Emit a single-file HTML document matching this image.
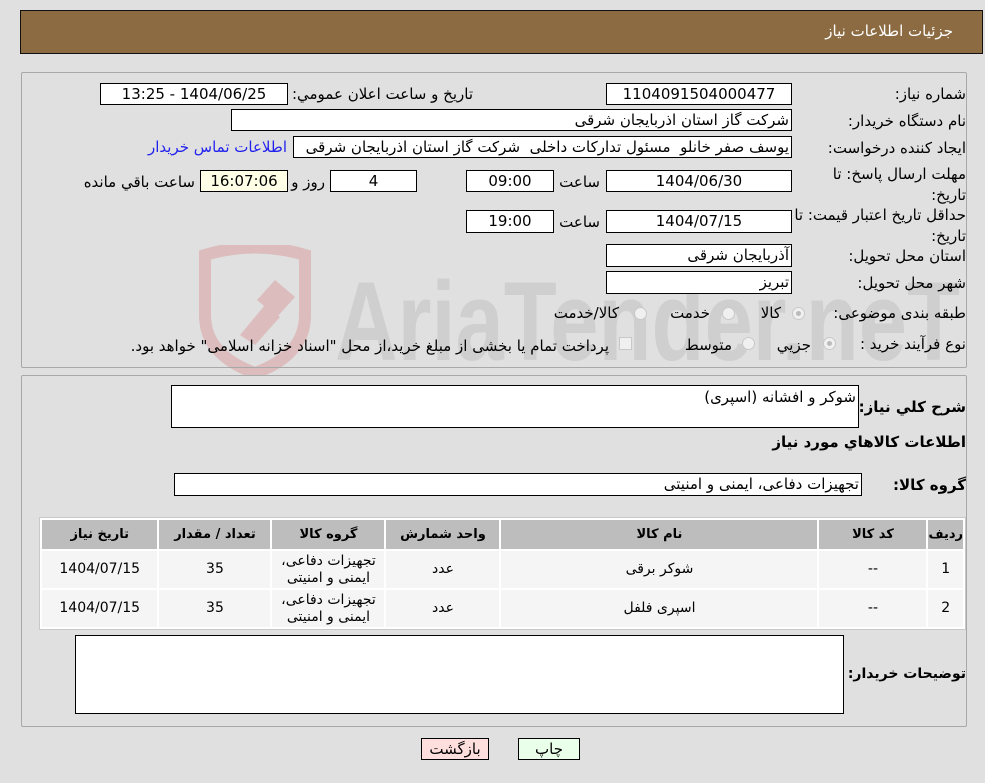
<!DOCTYPE html>
<html><head><meta charset="utf-8"><style>
*{box-sizing:border-box;margin:0;padding:0}
body{width:985px;height:783px;background:#e0e0e0;position:relative;overflow:hidden;font-family:Tahoma,"DejaVu Sans","Liberation Sans",sans-serif;font-size:15px;color:#000}
.a{position:absolute;white-space:nowrap}
.l{position:absolute;white-space:nowrap;direction:rtl;text-align:right}
.b{position:absolute;background:#fff;border:1px solid #000;font-size:15px;text-align:center;line-height:20px;white-space:nowrap;direction:rtl}
.br{text-align:right;padding-right:2px}
.panel{position:absolute;border:1px solid #a8a8a8;border-radius:2px}
.rad{position:absolute;width:13px;height:13px;border-radius:50%;border:1px solid #c8c8c8;background:#f0f0f0}
.rad.on:after{content:"";position:absolute;left:3px;top:3px;width:5px;height:5px;border-radius:50%;background:#bbb}
table{border-collapse:separate;border-spacing:2px;position:absolute;left:39px;top:517px;width:927px;background:#fff;border:1px solid #c8c8c8;font-size:14px}
th{background:#bdbdbd;height:29px;font-weight:bold;font-size:13px}
td{background:#f5f5f5;height:37px;text-align:center;line-height:17px}
</style></head><body>
<div class="a" style="left:20px;top:10px;width:963px;height:44px;background:#8c6b42;border:1px solid #111"></div>
<div class="l" style="right:32px;top:22px;color:#fff;font-size:15px">جزئیات اطلاعات نیاز</div>

<!-- watermark -->
<svg class="a" style="left:195px;top:245px" width="790" height="130">
<path d="M10 10 Q60 -5 110 10 L110 70 Q110 110 60 128 Q10 110 10 70Z" fill="none" stroke="#dcbcbc" stroke-width="12"/>
<path d="M45 90 L70 60 L85 72 L60 100Z M62 55 L80 35 L100 52 L82 72Z" fill="#dcbcbc"/>
<text x="140" y="115" font-family="Liberation Sans" font-weight="bold" font-size="112" fill="#cfcfcf" textLength="625" lengthAdjust="spacingAndGlyphs">AriaTender.neT</text>
</svg>

<div class="panel" style="left:21px;top:72px;width:946px;height:296px"></div>
<div class="l" style="right:19px;top:85px">شماره نیاز:</div>
<div class="b" style="left:606px;top:83px;width:186px;height:22px">1104091504000477</div>
<div class="l" style="right:512px;top:85px">تاریخ و ساعت اعلان عمومي:</div>
<div class="b" style="left:100px;top:83px;width:188px;height:22px">1404/06/25 - 13:25</div>

<div class="l" style="right:19px;top:112px">نام دستگاه خریدار:</div>
<div class="b br" style="left:231px;top:109px;width:561px;height:22px">شرکت گاز استان اذربایجان شرقی</div>

<div class="l" style="right:19px;top:139px">ایجاد کننده درخواست:</div>
<div class="b br" style="left:293px;top:136px;width:499px;height:22px;overflow:hidden">یوسف صفر خانلو &nbsp;مسئول تدارکات داخلی &nbsp;شرکت گاز استان اذربایجان شرقی</div>
<div class="l" style="right:698px;top:138px;color:#2222ee;font-size:15px">اطلاعات تماس خریدار</div>

<div class="l" style="right:19px;top:164px;line-height:21px">مهلت ارسال پاسخ: تا<br>تاریخ:</div>
<div class="b" style="left:606px;top:170px;width:186px;height:22px">1404/06/30</div>
<div class="l" style="right:385px;top:173px;font-size:15px">ساعت</div>
<div class="b" style="left:466px;top:170px;width:88px;height:22px">09:00</div>
<div class="b" style="left:330px;top:170px;width:87px;height:22px">4</div>
<div class="l" style="right:660px;top:173px;font-size:15px">روز و</div>
<div class="b" style="left:200px;top:170px;width:88px;height:22px;background:#ffffe8">16:07:06</div>
<div class="l" style="right:790px;top:173px;font-size:15px">ساعت باقي مانده</div>

<div class="l" style="right:19px;top:205px;line-height:21px">حداقل تاریخ اعتبار قیمت: تا<br>تاریخ:</div>
<div class="b" style="left:606px;top:210px;width:186px;height:23px">1404/07/15</div>
<div class="l" style="right:385px;top:213px;font-size:15px">ساعت</div>
<div class="b" style="left:466px;top:210px;width:88px;height:23px">19:00</div>

<div class="l" style="right:19px;top:247px">استان محل تحویل:</div>
<div class="b br" style="left:606px;top:244px;width:186px;height:23px">آذربایجان شرقی</div>
<div class="l" style="right:19px;top:274px">شهر محل تحویل:</div>
<div class="b br" style="left:606px;top:271px;width:186px;height:23px">تبریز</div>

<div class="l" style="right:19px;top:304px">طبقه بندی موضوعی:</div>
<div class="rad on" style="left:792px;top:307px"></div>
<div class="l" style="right:204px;top:304px;font-size:15px">کالا</div>
<div class="rad" style="left:722px;top:307px"></div>
<div class="l" style="right:275px;top:304px;font-size:15px">خدمت</div>
<div class="rad" style="left:634px;top:307px"></div>
<div class="l" style="right:366px;top:304px;font-size:15px">کالا/خدمت</div>

<div class="l" style="right:19px;top:335px">نوع فرآیند خرید :</div>
<div class="rad on" style="left:823px;top:337px"></div>
<div class="l" style="right:174px;top:336px;font-size:15px">جزيي</div>
<div class="rad" style="left:742px;top:337px"></div>
<div class="l" style="right:253px;top:336px;font-size:15px">متوسط</div>
<div class="rad" style="left:619px;top:337px;border-radius:0"></div>
<div class="l" style="right:376px;top:337px;font-size:15px">پرداخت تمام یا بخشی از مبلغ خرید،از محل "اسناد خزانه اسلامی" خواهد بود.</div>

<div class="panel" style="left:21px;top:375px;width:946px;height:352px"></div>
<div class="l" style="right:19px;top:398px;font-weight:bold;font-size:15px">شرح کلي نیاز:</div>
<div class="b br" style="left:171px;top:385px;width:688px;height:43px;line-height:22px">شوکر و افشانه (اسپری)</div>
<div class="l" style="right:19px;top:433px;font-weight:bold;font-size:15px">اطلاعات کالاهاي مورد نياز</div>
<div class="l" style="right:19px;top:476px;font-weight:bold;font-size:15px">گروه کالا:</div>
<div class="b br" style="left:174px;top:473px;width:688px;height:23px">تجهیزات دفاعی، ایمنی و امنیتی</div>

<table dir="rtl">
<tr><th style="width:34px">رديف</th><th style="width:107px">کد کالا</th><th style="width:316px">نام کالا</th><th style="width:113px">واحد شمارش</th><th style="width:112px">گروه کالا</th><th style="width:111px">تعداد / مقدار</th><th>تاریخ نیاز</th></tr>
<tr><td>1</td><td>--</td><td>شوکر برقی</td><td>عدد</td><td>تجهیزات دفاعی،<br>ایمنی و امنیتی</td><td>35</td><td>1404/07/15</td></tr>
<tr><td>2</td><td>--</td><td>اسپری فلفل</td><td>عدد</td><td>تجهیزات دفاعی،<br>ایمنی و امنیتی</td><td>35</td><td>1404/07/15</td></tr>
</table>

<div class="l" style="right:19px;top:666px;font-weight:bold;font-size:14px">توضیحات خریدار:</div>
<div class="b" style="left:75px;top:635px;width:769px;height:79px"></div>

<div class="b" style="left:421px;top:738px;width:68px;height:22px;background:#ffdede;line-height:20px">بازگشت</div>
<div class="b" style="left:518px;top:738px;width:62px;height:22px;background:#eaffea;line-height:20px">چاپ</div>
</body></html>
